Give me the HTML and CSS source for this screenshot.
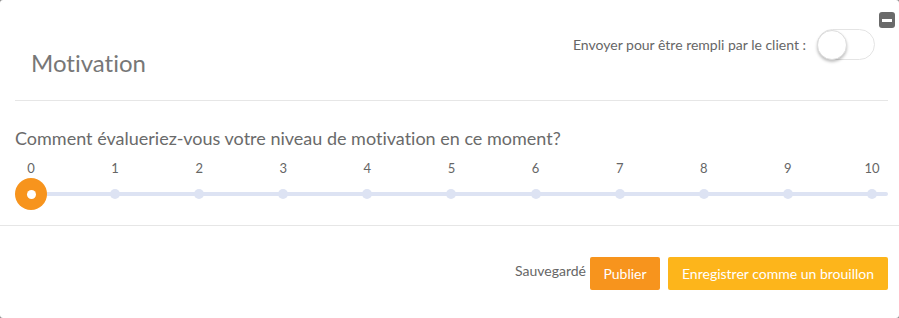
FILE: index.html
```html
<!DOCTYPE html>
<html lang="fr">
<head>
<meta charset="utf-8">
<title>Motivation</title>
<link rel="stylesheet" href="styles.css">
</head>
<body>
<div class="modal">
  <button class="collapse" aria-label="Réduire"><span class="collapse-bar"></span></button>
  <header class="header">
    <h2 class="title">Motivation</h2>
    <div class="send">
      <span class="send-label">Envoyer pour être rempli par le client :</span>
      <span class="toggle"><span class="knob"></span></span>
    </div>
  </header>
  <section class="question">
    <p class="question-text">Comment évalueriez-vous votre niveau de motivation en ce moment?</p>
    <div class="scale">
      <div class="labels">
        <span>0</span><span>1</span><span>2</span><span>3</span><span>4</span><span>5</span><span>6</span><span>7</span><span>8</span><span>9</span><span>10</span>
      </div>
      <div class="track">
        <span class="dot selected"><span class="inner"></span></span>
        <span class="dot"></span><span class="dot"></span><span class="dot"></span><span class="dot"></span><span class="dot"></span>
        <span class="dot"></span><span class="dot"></span><span class="dot"></span><span class="dot"></span><span class="dot"></span>
      </div>
    </div>
  </section>
  <footer class="footer">
    <span class="saved">Sauvegardé</span>
    <button class="btn btn-publish">Publier</button>
    <button class="btn btn-draft">Enregistrer comme un brouillon</button>
  </footer>
</div>
</body>
</html>
```
FILE: styles.css
```css
* { box-sizing: border-box; }
html, body { margin: 0; padding: 0; }
body {
  background: #8a8a8a;
  font-family: Lato, "Open Sans", sans-serif;
  font-variant-ligatures: none;
  color: #666;
}
.modal {
  position: relative;
  width: 899px;
  height: 318px;
  background: #fff;
  border-radius: 3px;
  overflow: hidden;
}
.collapse {
  position: absolute;
  top: 12px;
  right: 4px;
  width: 16px;
  height: 16px;
  border: 0;
  padding: 0;
  border-radius: 3px;
  background: #6a6a6a;
  display: flex;
  align-items: center;
  justify-content: center;
}
.collapse-bar {
  width: 10px;
  height: 3px;
  background: #fff;
}
.header {
  margin: 0 11px 0 15px;
  height: 101px;
  border-bottom: 1px solid #e6e6e6;
  display: flex;
  justify-content: space-between;
  align-items: flex-start;
}
.title {
  margin: 48px 0 0 16px;
  font-size: 24px;
  font-weight: 400;
  color: #777;
  line-height: 30px;
}
.send {
  margin-top: 29px;
  margin-right: 13px;
  display: flex;
  align-items: center;
  gap: 11px;
}
.send-label {
  font-size: 14px;
  color: #666;
  margin-top: -1px;
}
.toggle {
  width: 58px;
  height: 31px;
  border-radius: 16px;
  border: 1px solid #e4e4e4;
  background: #fff;
  display: flex;
  align-items: center;
}
.knob {
  width: 30px;
  height: 30px;
  border-radius: 50%;
  background: #fff;
  border: 1px solid #ddd;
  box-shadow: 0 2px 3px rgba(0,0,0,0.25);
  margin-left: -1px;
}
.question {
  margin: 0 11px 0 15px;
  height: 124px;
  padding-top: 24px;
}
.question-text {
  margin: 0;
  font-size: 18px;
  line-height: 26px;
  color: #6a6a6a;
}
.scale {
  margin-top: 9px;
}
.labels {
  display: flex;
  justify-content: space-between;
  padding-left: 11px;
  margin-right: 11px;
  font-size: 13px;
  line-height: 16px;
  color: #666;
}
.labels span {
  width: 10px;
  display: flex;
  justify-content: center;
}
.track {
  margin: 16px 0 0 16px;
  height: 4px;
  background: #dde3f3;
  border-radius: 2px;
  display: flex;
  justify-content: space-between;
  align-items: center;
  padding-right: 16px;
}
.dot {
  width: 10px;
  height: 10px;
  border-radius: 50%;
  background: #dde3f3;
  margin-left: -5px;
  flex: none;
}
.dot:last-child { margin-right: -5px; }
.dot.selected {
  width: 32px;
  height: 32px;
  margin-left: -16px;
  margin-right: -11px;
  background: #f7941d;
  display: flex;
  align-items: center;
  justify-content: center;
}
.inner {
  width: 9px;
  height: 9px;
  border-radius: 50%;
  background: #fff;
}
.footer {
  border-top: 1px solid #e6e6e6;
  height: 93px;
  padding: 31px 11px 0 0;
  display: flex;
  justify-content: flex-end;
  align-items: flex-start;
}
.saved {
  font-size: 14px;
  margin-top: 5px;
  margin-right: 4px;
  color: #666;
}
.btn {
  height: 33px;
  border: 0;
  border-radius: 2px;
  color: #fff;
  font-family: Lato, "Open Sans", sans-serif;
  font-size: 14px;
  padding: 0 13px;
}
.btn-publish {
  background: #f7941d;
  width: 70px;
  margin-right: 8px;
}
.btn-draft {
  background: #fdb51b;
  width: 220px;
}
```
